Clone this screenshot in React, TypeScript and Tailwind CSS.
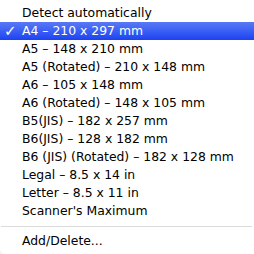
import React from 'react';

const items = [
  'Detect automatically',
  'A4 – 210 x 297 mm',
  'A5 – 148 x 210 mm',
  'A5 (Rotated) – 210 x 148 mm',
  'A6 – 105 x 148 mm',
  'A6 (Rotated) – 148 x 105 mm',
  'B5(JIS) – 182 x 257 mm',
  'B6(JIS) – 128 x 182 mm',
  'B6 (JIS) (Rotated) – 182 x 128 mm',
  'Legal – 8.5 x 14 in',
  'Letter – 8.5 x 11 in',
  "Scanner's Maximum",
];

const App = () => {
  return (
    <div className="w-[254px] h-[254px] bg-[#f3f3f3] overflow-hidden">
      <div className="h-[254px] bg-white/95 rounded-bl-[5px] pt-1 text-[12.4px] text-black font-['DejaVu_Sans',sans-serif]">
        {items.map((label, i) => {
          const selected = i === 1;
          return (
            <div
              key={label}
              className={
                selected
                  ? 'h-[18px] flex items-center bg-gradient-to-b from-[#5a78f5] to-[#1d40f2] text-white'
                  : 'h-[18px] flex items-center'
              }
            >
              <span className="w-[22px] pl-[4px] text-[15px] leading-none">{selected ? '✓' : ''}</span>
              <span className="leading-none whitespace-nowrap">{label}</span>
            </div>
          );
        })}
        {/* Separator */}
        <div className="h-[12px] flex items-center pl-[1px] pr-[2px]">
          <div className="h-px w-full bg-[#dcdcdc]" />
        </div>
        <div className="h-[18px] flex items-center pl-[22px]">Add/Delete...</div>
      </div>
    </div>
  );
};

export default App;
